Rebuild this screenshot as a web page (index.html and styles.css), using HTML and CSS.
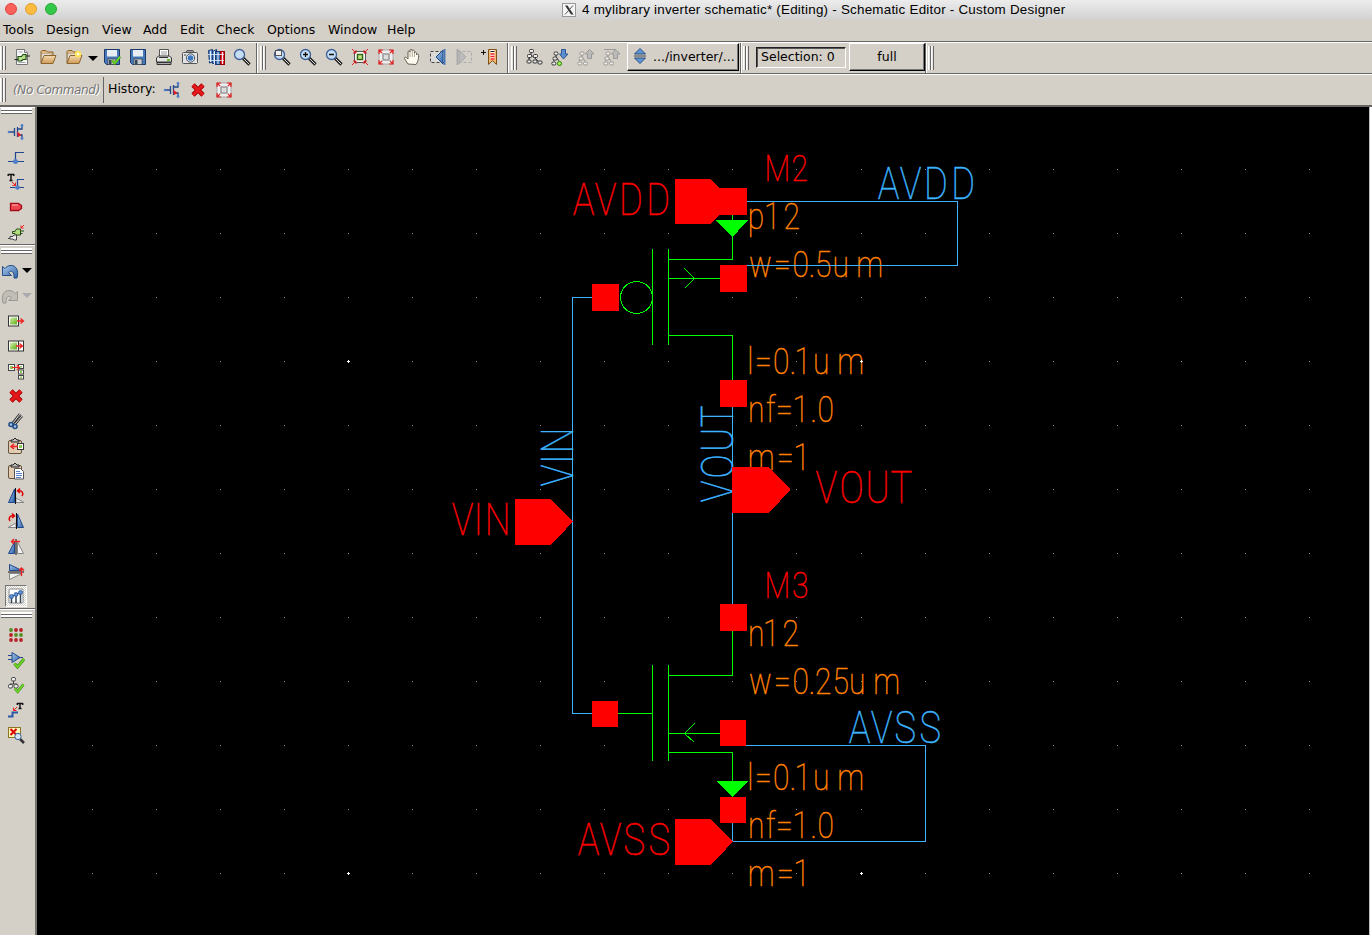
FILE: index.html
```html
<!DOCTYPE html>
<html lang="en">
<head>
<meta charset="utf-8">
<title>Schematic Editor</title>
<link rel="stylesheet" href="styles.css">
</head>
<body>
<svg class="defs" width="0" height="0" aria-hidden="true">
<defs>
<linearGradient id="blue" x1="0" y1="0" x2="1" y2="1"><stop offset="0" stop-color="#a9c8ea"/><stop offset="1" stop-color="#2f64a8"/></linearGradient>
<linearGradient id="tan" x1="0" y1="0" x2="0" y2="1"><stop offset="0" stop-color="#f3d9b0"/><stop offset="1" stop-color="#cf9b58"/></linearGradient>
<linearGradient id="lime" x1="0" y1="0" x2="1" y2="1"><stop offset="0" stop-color="#d2efa9"/><stop offset="1" stop-color="#5fae1b"/></linearGradient>
<symbol id="lens" viewBox="0 0 18 18"><path d="M10 10l6.500 6.500" stroke="#222" stroke-width="3.200"/><path d="M10.500 10.500l5.500 5.500" stroke="#ddd" stroke-width="1"/><circle cx="6.500" cy="6.500" r="5" fill="#c5dcf5" stroke="#3c5f93" stroke-width="1.300"/></symbol>
<symbol id="cross" viewBox="0 0 18 18"><path d="M4 4l10 10M14 4l-10 10" stroke="#a50000" stroke-width="4.600"/><path d="M4 4l10 10M14 4l-10 10" stroke="#e8171c" stroke-width="3"/></symbol>
<symbol id="fit" viewBox="0 0 18 18"><rect x="2" y="2" width="14" height="14" fill="#eee" stroke="#aaa"/><rect x="6" y="6" width="6" height="6" fill="#ddd" stroke="#999" stroke-width="1.500"/><path d="M2 6V2h4M12 2h4v4M16 12v4h-4M6 16H2v-4M2 2l3 3M16 2l-3 3M16 16l-3-3M2 16l3-3" fill="none" stroke="#e22020" stroke-width="1.200"/></symbol>
<symbol id="mos" viewBox="0 0 18 18"><path d="M2 9h5M7.500 5v8M10.500 4v10M10.500 6H15V2.500M10.500 12H15v4" fill="none" stroke="#20488e" stroke-width="1.300"/><path d="M10 8.500l4.500 3.500-3.500 2z" fill="#e21f26"/><circle cx="2" cy="9" r="1.300" fill="#5280c8"/><circle cx="15" cy="2.500" r="1.400" fill="#5280c8"/><circle cx="15" cy="15.500" r="1.400" fill="#5280c8"/></symbol>
<symbol id="tree" viewBox="0 0 18 18"><path d="M5 6v3M5 9L2.500 13M5 9l3 4" fill="none" stroke="currentColor"/><g fill="#eee" stroke="currentColor"><rect x="3" y="4" width="4" height="3" rx="1.300"/><rect x="2" y="9" width="4" height="3" rx="1.300"/><rect x="0.800" y="14" width="4" height="3" rx="1.300"/><rect x="6.500" y="14" width="4" height="3" rx="1.300"/></g></symbol>
<symbol id="tick" viewBox="0 0 12 12"><path d="M1.500 6.500l3 3.500L11 2" fill="none" stroke="#3d8a12" stroke-width="3"/><path d="M1.500 6.500l3 3.500L11 2" fill="none" stroke="#6fd827" stroke-width="1.800"/></symbol>
<symbol id="clip" viewBox="0 0 18 18"><rect x="1.500" y="3.500" width="13" height="13" rx="1.500" fill="#e1cbb1" stroke="#66523d"/><path d="M4 5V3h2l2-2 2 2h2v2z" fill="#bbb" stroke="#222"/></symbol>
<symbol id="floppy" viewBox="0 0 18 18"><path d="M1.500 1.500h15v15h-13l-2-2z" fill="#4778b8" stroke="#1c396c"/><rect x="4" y="2" width="10" height="6.500" fill="#e7edf3"/><rect x="5" y="11" width="8" height="5.500" fill="#c8ccd0" stroke="#333" stroke-width=".6"/><rect x="6" y="12" width="2.500" height="4" fill="#345"/></symbol>
<symbol id="folder" viewBox="0 0 18 18"><path d="M2 15V3.500l1-1h4l1.500 1.500H14V8" fill="#dcb683" stroke="#8c6430"/><path d="M3 6h9v7H3z" fill="#f5f5f2" stroke="#aaa" stroke-width=".6"/><path d="M2 15.500L5 7.500h12l-3 8z" fill="url(#tan)" stroke="#8c6430"/></symbol>
<pattern id="grid-left" x="92" y="169" width="64" height="64" patternUnits="userSpaceOnUse"><rect width="1" height="1" fill="#929292"/></pattern>
<pattern id="grid-right" x="861" y="169" width="64" height="64" patternUnits="userSpaceOnUse"><rect width="1" height="1" fill="#929292"/></pattern>
</defs>
</svg>

<header class="titlebar">
  <div class="lights"><span class="light close"></span><span class="light minimize"></span><span class="light expand"></span></div>
  <div class="title"><svg class="x-icon" viewBox="0 0 14 14"><rect x=".5" y=".5" width="13" height="13" fill="#f5f5f5" stroke="#999"/><path d="M3 2.500h2.500l6 9H9z" fill="#333"/><path d="M11 2.500l-8 9" stroke="#555"/></svg><span class="title-text">4 mylibrary inverter schematic* (Editing) - Schematic Editor - Custom Designer</span></div>
</header>

<nav class="menu">
  <span class="m-tools">Tools</span><span class="m-design">Design</span><span class="m-view">View</span><span class="m-add">Add</span><span class="m-edit">Edit</span><span class="m-check">Check</span><span class="m-options">Options</span><span class="m-window">Window</span><span class="m-help">Help</span>
</nav>

<div class="toolbar">
  <div class="group g-file">
    <i class="grip"></i>
    <b class="tool"><svg viewBox="0 0 18 18"><path d="M3.500 1.500h8l3 3v12h-11z" fill="#f6f6f6" stroke="#777"/><path d="M11.500 1.500v3h3" fill="#ddd" stroke="#777"/><path d="M5.500 4h4M5.500 14.500h7" stroke="#aaa"/><path d="M1.500 11.500H5M13 8h4" stroke="#222"/><path d="M5 8.500h3.500L10 6.500h3v5h-3L8.500 13H5z" fill="#b8e08a" stroke="#1b4d12" stroke-width="1.200"/></svg></b>
    <b class="tool"><svg viewBox="0 0 18 18"><use href="#folder"/></svg></b>
    <b class="tool"><svg viewBox="0 0 18 18"><use href="#folder"/><circle cx="13" cy="6" r="3.200" fill="#ffe14d"/><circle cx="13" cy="6" r="1.500" fill="#fffde0"/></svg></b>
    <i class="drop"></i>
    <b class="tool"><svg viewBox="0 0 18 18"><use href="#floppy"/><use href="#tick" x="8" y="6" width="10" height="12"/></svg></b>
    <b class="tool"><svg viewBox="0 0 18 18"><use href="#floppy"/></svg></b>
    <b class="tool"><svg viewBox="0 0 18 18"><path d="M4.500 9V1.500h9V9" fill="#fff" stroke="#555"/><path d="M6 4h6M6 6h6" stroke="#999"/><path d="M1.500 14V10l2-2h11l2 2v4z" fill="#e4e4e4" stroke="#333"/><path d="M2 14.500h14v2H2z" fill="#aaa" stroke="#333"/><rect x="12" y="11" width="3" height="2" fill="#67bd2c"/><path d="M4 9.500h9" stroke="#333"/></svg></b>
    <b class="tool"><svg viewBox="0 0 18 18"><rect x="1.500" y="4.500" width="15" height="11" rx="1" fill="#e2e4e6" stroke="#555"/><path d="M5 4.500l1-2h6l1 2z" fill="#999" stroke="#555"/><circle cx="9.500" cy="10" r="4.200" fill="#dce8f5" stroke="#555"/><circle cx="9.500" cy="10" r="2.800" fill="#3e78c1"/><path d="M3 7h2" stroke="#444"/></svg></b>
    <b class="tool"><svg viewBox="0 0 18 18"><path d="M1.500 2.500l4-1v12.500l-3 1z" fill="#5c8fd0" stroke="#173a70"/><path d="M5.500 3.500l4-2v14h-4z" fill="#6e9edb" stroke="#173a70"/><rect x="8.500" y="3.500" width="5" height="13" fill="#3567ab" stroke="#173a70"/><rect x="13.500" y="3.500" width="4" height="13" fill="#e62430" stroke="#900"/><path d="M1 6.500h16M1 12.500h16" stroke="#e6eefb" stroke-width=".8"/><path d="M3.500 3v11M7.500 3v13M11 4v12M15.500 4v12" stroke="#e6eefb"/></svg></b>
    <b class="tool"><svg viewBox="0 0 18 18"><use href="#lens"/></svg></b>
  </div>
  <div class="group g-zoom">
    <i class="grip"></i>
    <b class="tool"><svg viewBox="0 0 18 18"><use href="#lens"/><rect x="2.500" y="2.500" width="6" height="5" fill="#f1f1f1" stroke="#555"/></svg></b>
    <b class="tool"><svg viewBox="0 0 18 18"><use href="#lens"/><path d="M4 6.500h5M6.500 4v5" stroke="#111" stroke-width="1.300"/></svg></b>
    <b class="tool"><svg viewBox="0 0 18 18"><use href="#lens"/><path d="M4 6.500h5" stroke="#111" stroke-width="1.500"/></svg></b>
    <b class="tool"><svg viewBox="0 0 18 18"><rect x="3.500" y="3.500" width="11" height="11" fill="#f6f6f6" stroke="#555"/><rect x="6.500" y="6.500" width="5" height="5" fill="#bde98b" stroke="#396a13" stroke-width="1.500"/><path d="M1 1l4 4M17 1l-4 4M1 17l4-4M17 17l-4-4M2 5h3V2M13 2v3h3M2 13h3v3M16 13h-3v3" fill="none" stroke="#e22020"/></svg></b>
    <b class="tool"><svg viewBox="0 0 18 18"><use href="#fit"/></svg></b>
    <b class="tool"><svg viewBox="0 0 18 18"><path d="M5 16L1.500 10.500c-.5-1 .8-1.800 1.700-1L5 11V4c0-1.500 2-1.500 2 0V2.500c0-1.500 2.200-1.500 2.200 0V3c0-1.400 2.200-1.400 2.200.3V5c0-1.300 2.100-1.300 2.100.3V7c.3-1.200 2.500-1.200 2.200.8-.2 4-.9 6-2.700 8.700z" fill="#fffaf0" stroke="#6b6155"/><path d="M7 4v5M9.300 3v6M11.500 5v4" stroke="#a59a8b" stroke-width=".8"/></svg></b>
    <b class="tool"><svg viewBox="0 0 18 18"><rect x="1.500" y="3.500" width="14" height="11" fill="#dcdad6" stroke="#444" stroke-dasharray="3 2"/><path d="M14 2v14L7 9z" fill="url(#blue)" stroke="#204a86"/><path d="M15.500 1v16" stroke="#4b78b5" stroke-width="2"/></svg></b>
    <b class="tool"><svg viewBox="0 0 18 18"><rect x="2.500" y="3.500" width="14" height="11" fill="none" stroke="#aaa" stroke-dasharray="3 2"/><path d="M4 2v14l7-7z" fill="#bbb" stroke="#aaa"/><path d="M2.500 1v16" stroke="#aaa" stroke-width="2"/></svg></b>
    <b class="tool"><svg viewBox="0 0 18 18"><path d="M0 4.500h5M2.500 2v5" stroke="#111"/><path d="M7.500 1.500h8v15l-4-4-4 4z" fill="#f5b96b" stroke="#80501a"/><path d="M9.500 2v10h4V2z" fill="#fff"/><path d="M9.500 3.500h4" stroke="#222"/><path d="M9.500 6h4M9.500 8.500h4M9.500 11h4" stroke="#e22" stroke-width="1.500"/></svg></b>
  </div>
  <div class="group g-tree">
    <i class="grip"></i>
    <b class="tool"><svg viewBox="0 0 18 18"><path d="M6 4v3M6 7l-2 4M6 7l5 4M4 10v4M11 11l4 4" stroke="#333"/><g fill="#eee" stroke="#333"><rect x="4.500" y="1.500" width="4" height="3" rx="1"/><rect x="2.500" y="6.500" width="4" height="3" rx="1"/><rect x="8.500" y="6.500" width="4" height="3" rx="1"/><rect x="2" y="12" width="4" height="3" rx="1"/><rect x="8" y="12" width="4" height="3" rx="1"/><rect x="13" y="13" width="4" height="3" rx="1"/></g></svg></b>
    <b class="tool ink"><svg viewBox="0 0 18 18"><use href="#tree"/><circle cx="8.500" cy="15.500" r="2" fill="#a6ef59" stroke="#3c9411"/><path d="M10.500 1.500h4V6H17l-4.500 5L8.500 6h2z" fill="#5c8fd0" stroke="#2c568f"/></svg></b>
    <b class="tool faint"><svg viewBox="0 0 18 18"><use href="#tree"/><path d="M10.500 10.500h4V6H17l-4.500-4.500L8.500 6h2z" fill="#bbb" stroke="#999"/></svg></b>
    <b class="tool faint"><svg viewBox="0 0 18 18"><use href="#tree"/><path d="M1 1.500h12M10.500 10.500h4V6H17l-4.500-4.500L8.500 6h2z" fill="#bbb" stroke="#999"/></svg></b>
    <button class="path-button"><svg class="updown" viewBox="0 0 12 16"><path d="M6 .5L11.500 6H.5zM6 15.500L11.500 10H.5z" fill="#5f95d4" stroke="#274f83"/><path d="M0 8h12" stroke="#444"/></svg><span>.../inverter/...</span></button>
  </div>
  <div class="group g-selection">
    <i class="grip"></i>
    <div class="selection">Selection: 0</div>
    <button class="full-button">full</button>
  </div>
  <div class="group g-end"><i class="grip"></i></div>
</div>

<div class="history">
  <i class="grip"></i>
  <em class="command">(No Command)</em>
  <span class="history-label">History:</span>
  <b class="tool"><svg viewBox="0 0 18 18"><use href="#mos"/></svg></b>
  <b class="tool"><svg viewBox="0 0 18 18"><use href="#cross"/></svg></b>
  <b class="tool"><svg viewBox="0 0 18 18"><use href="#fit"/></svg></b>
</div>

<main class="workspace">
  <aside class="sidebar">
    <section class="palette p-create">
      <i class="bar"></i>
      <b class="side"><svg viewBox="0 0 18 18"><use href="#mos"/></svg></b>
      <b class="side"><svg viewBox="0 0 18 18"><path d="M1 13.500h16M8.500 13V4.500H17" fill="none" stroke="#20488e" stroke-width="1.200"/><circle cx="8.500" cy="13.500" r="2.500" fill="#5280c8"/></svg></b>
      <b class="side"><svg viewBox="0 0 18 18"><path d="M3 14.500h14M10.500 14V6.500H17" fill="none" stroke="#20488e" stroke-width="1.200"/><circle cx="10.500" cy="14.500" r="2.300" fill="#5280c8"/><path d="M1 1.500h6M4 1.500v6M2.500 7.500h3M1.200 1v2M6.800 1v2" stroke="#111" stroke-width="1.400"/><path d="M5 9l3.500 3.500M8.500 9.500v3h-3" fill="none" stroke="#e22"/></svg></b>
      <b class="side"><svg viewBox="0 0 18 18"><path d="M3.500 5.500h8l3 2v3l-3 2h-8z" fill="#ee4651" stroke="#a50c16" stroke-width="1.300"/><path d="M5 7h6" stroke="#ffb5b9"/></svg></b>
      <b class="side"><svg viewBox="0 0 18 18"><path d="M5.500 8.500H8L9.500 6h4v6h-4L8 10.500H5.500zM13.500 8h3.500M13.500 10.500h2" fill="#b2dc7e" stroke="#234e14"/><path d="M1 15.500h2M3 13.500h3l1-1.500h2.500v5H7l-1-1H3z" fill="#eee" stroke="#444"/><path d="M17 2l-3 3M14 2.500V5h2.500" fill="none" stroke="#e22"/></svg></b>
    </section>
    <section class="palette p-edit">
      <i class="bar"></i>
      <div class="pair"><b class="side"><svg viewBox="0 0 18 18"><path d="M1.500 4.500v9h9L7.500 10.500c3-2.500 6-1 5.500 5.500h3c2-8-1-12.500-6-12.500-3 0-5 1.500-6 3z" fill="url(#blue)" stroke="#234f85"/></svg></b><i class="drop"></i></div>
      <div class="pair"><b class="side"><svg viewBox="0 0 18 18"><path d="M16.500 4.500v9h-9L10.500 10.500c-3-2.500-6-1-5.500 5.500H2c-2-8 1-12.500 6-12.500 3 0 5 1.500 6 3z" fill="#c1beb8" stroke="#9a9791"/></svg></b><i class="drop dim"></i></div>
      <b class="side"><svg viewBox="0 0 18 18"><rect x="1.500" y="4" width="10" height="10" fill="#fff" stroke="#333"/><rect x="3" y="5.500" width="7" height="7" fill="url(#lime)"/><path d="M10 9h6M13.500 6.500L16.500 9l-3 2.500" fill="none" stroke="#e22" stroke-width="1.300"/></svg></b>
      <b class="side"><svg viewBox="0 0 18 18"><rect x="1.500" y="4" width="15" height="10" fill="#fff" stroke="#333"/><rect x="3" y="5.500" width="7" height="7" fill="url(#lime)"/><path d="M11.500 4v10" stroke="#333"/><path d="M9 9h6M12.500 6.500L15.500 9l-3 2.500" fill="none" stroke="#e22" stroke-width="1.300"/></svg></b>
      <b class="side"><svg viewBox="0 0 18 18"><g fill="#fff" stroke="#444"><rect x="1.500" y="2.500" width="6" height="6"/><rect x="11.500" y="2.500" width="5" height="4"/><rect x="11.500" y="8" width="5" height="4"/><rect x="11.500" y="13.500" width="5" height="3.500"/></g><path d="M3 4h3v3H3zM13 4h2v1.500h-2zM13 9h2v2h-2zM13 14.500h2V16h-2z" fill="#8ccb4e"/><path d="M5 5.500h7M10 3l2.500 2.500L10 8" fill="none" stroke="#e22" stroke-width="1.200"/></svg></b>
      <b class="side"><svg viewBox="0 0 18 18"><use href="#cross"/></svg></b>
      <b class="side"><svg viewBox="0 0 18 18"><path d="M5 12l8-10M8 12L15 4" stroke="#333" stroke-width="2.600"/><path d="M6 11l7-9M8 12l7-8" stroke="#ddd"/><circle cx="4" cy="12.500" r="2" fill="#a7c4e8" stroke="#234f85" stroke-width="1.600"/><circle cx="8" cy="14.500" r="2" fill="#a7c4e8" stroke="#234f85" stroke-width="1.600"/></svg></b>
      <b class="side"><svg viewBox="0 0 18 18"><use href="#clip"/><rect x="10.500" y="6.500" width="6" height="6" fill="#fff" stroke="#333"/><rect x="12" y="8" width="3" height="3" fill="#8ccb4e"/><path d="M11 9.500H4M7 7L4 9.500 7 12" fill="none" stroke="#e22" stroke-width="1.500"/></svg></b>
      <b class="side"><svg viewBox="0 0 18 18"><use href="#clip"/><path d="M7.500 6.500h6l3 3v7.500h-9z" fill="#fff" stroke="#555"/><path d="M9 9.500h4M9 11.500h6M9 13.500h6M9 15.500h5" stroke="#5585c7"/></svg></b>
      <b class="side"><svg viewBox="0 0 18 18"><path d="M7.500 2v13.500h-6z" fill="url(#blue)" stroke="#20488e"/><path d="M9 15.500h8L9 11z" fill="#eee" stroke="#888"/><path d="M8.500 1v16" stroke="#111"/><path d="M15 9c2-3 0-6-4-5M13 1.500L10.500 4 13 6" fill="none" stroke="#d00" stroke-width="1.500"/></svg></b>
      <b class="side"><svg viewBox="0 0 18 18"><path d="M10.500 2v13.500h6z" fill="url(#blue)" stroke="#20488e"/><path d="M9 15.500H1L9 11z" fill="#eee" stroke="#888"/><path d="M9.500 1v16" stroke="#111"/><path d="M3 9c-2-3 0-6 4-5M5 1.500L7.500 4 5 6" fill="none" stroke="#d00" stroke-width="1.500"/></svg></b>
      <b class="side"><svg viewBox="0 0 18 18"><path d="M7.500 4v11.500h-6z" fill="url(#blue)" stroke="#20488e"/><path d="M10.500 4v11.500h6z" fill="#f2f2f2" stroke="#888"/><path d="M9 1v16" stroke="#111"/><path d="M4.500 3.500H13M7 1L4.500 3.500 7 6" fill="none" stroke="#e22" stroke-width="1.400"/></svg></b>
      <b class="side"><svg viewBox="0 0 18 18"><path d="M2.500 1.500v6H15z" fill="url(#blue)" stroke="#20488e"/><path d="M2.500 10.500v6L15 10.500z" fill="#f2f2f2" stroke="#888"/><path d="M1 9h16" stroke="#111"/><path d="M14.500 13V5M12 7.500L14.500 5 17 7.500" fill="none" stroke="#e22" stroke-width="1.400"/></svg></b>
      <b class="side pressed"><svg viewBox="0 0 18 18"><rect x="2" y="2" width="14" height="14" rx="1" fill="#fff" stroke="#888"/><path d="M4.500 9v7M9 7v9M13.500 5v11" stroke="#345" stroke-width="1.500"/><path d="M4.500 9.500L13.500 5.500" stroke="#345"/><g fill="#5d91d4" stroke="#20488e" stroke-width=".7"><circle cx="4.500" cy="9.500" r="2"/><circle cx="9" cy="7.500" r="2"/><circle cx="13.500" cy="5.500" r="2"/></g></svg></b>
    </section>
    <section class="palette p-check">
      <i class="bar"></i>
      <b class="side"><svg viewBox="0 0 18 18"><g fill="#b81f27"><circle cx="4" cy="4" r="1.900" fill="#538f22"/><circle cx="9" cy="4" r="1.900"/><circle cx="14" cy="4" r="1.900"/><circle cx="4" cy="9" r="1.900"/><circle cx="9" cy="9" r="1.900" fill="#538f22"/><circle cx="14" cy="9" r="1.900" fill="#538f22"/><circle cx="4" cy="14" r="1.900"/><circle cx="9" cy="14" r="1.900"/><circle cx="14" cy="14" r="1.900"/></g></svg></b>
      <b class="side"><svg viewBox="0 0 18 18"><path d="M1 4.500h4M1 8.500h4M12 6.500h4" stroke="#20488e"/><path d="M5 1.500l8 5-8 5z" fill="url(#blue)" stroke="#20488e"/><use href="#tick" x="6" y="6" width="12" height="12"/></svg></b>
      <b class="side"><svg viewBox="0 0 18 18"><path d="M6.500 4v4M3 9.500V8h7v2" fill="none" stroke="#444"/><g fill="#eee" stroke="#444"><rect x="4.500" y="1.500" width="4" height="3.500" rx="1.300"/><rect x="1.500" y="8.500" width="4" height="3.500" rx="1.300"/><rect x="7" y="8.500" width="4" height="3.500" rx="1.300"/></g><use href="#tick" x="6.500" y="6" width="11" height="12"/></svg></b>
      <b class="side"><svg viewBox="0 0 18 18"><path d="M1 15.500h4.500v-4H11" fill="none" stroke="#2a5ba8" stroke-width="2"/><path d="M10 2.500h6M13 2v6M11.500 7.500h3M10.300 2v2M15.700 2v2" stroke="#111" stroke-width="1.400"/><path d="M10 6l-3.500 3.500M6.500 6.500v3h3" fill="none" stroke="#e22"/></svg></b>
      <b class="side"><svg viewBox="0 0 18 18"><rect x="1.500" y="1.500" width="12" height="10" fill="#fff6b5" stroke="#8a7625"/><path d="M3.500 3l6 6M9.500 3l-6 6" stroke="#d00" stroke-width="2"/><path d="M13 13l4 4" stroke="#333" stroke-width="2.500"/><circle cx="11" cy="10.500" r="3.200" fill="#cfe2f6" stroke="#3c5f93"/></svg></b>
    </section>
  </aside>

  <svg class="canvas" viewBox="37 107 1332 828" shape-rendering="crispEdges">
    <rect x="92" y="169" width="705" height="705" fill="url(#grid-left)"/>
    <rect x="861" y="169" width="449" height="705" fill="url(#grid-right)"/>

    <g class="param">
      <text transform="translate(560 229) scale(.3333 .4065)" x="588 637 695">p12</text>
      <text transform="translate(560 277) scale(.3333 .4065)" x="601 667 722 756 790 842 929">w=0.5um</text>
      <text transform="translate(560 374) scale(.3333 .4065)" x="571 610 664 699 728 784 872">l=0.1um</text>
      <text transform="translate(560 422) scale(.3333 .4065)" x="589 632 673 722 761 797">nf=1.0</text>
      <text transform="translate(560 470) scale(.3333 .4065)" x="604 676 725">m=1</text>
      <text transform="translate(560 646) scale(.3333 .4065)" x="589 634 692">n12</text>
      <text transform="translate(560 694) scale(.3333 .4065)" x="601 667 722 756 790 842 892 980">w=0.25um</text>
      <text transform="translate(560 790) scale(.3333 .4065)" x="571 610 664 699 728 784 872">l=0.1um</text>
      <text transform="translate(560 838) scale(.3333 .4065)" x="589 632 673 722 761 797">nf=1.0</text>
      <text transform="translate(560 886) scale(.3333 .4065)" x="604 676 725">m=1</text>
    </g>
    <g class="instance">
      <text transform="translate(560 181) scale(.3333 .4065)" x="652.500 719">M2</text>
      <text transform="translate(560 598) scale(.3333 .4065)" x="652.500 721">M3</text>
    </g>
    <g class="pin-name">
      <text transform="translate(560 215) scale(.3333 .4065)" x="70.500 136.500 213 294.500">AVDD</text>
      <text transform="translate(560 855) scale(.3333 .4065)" x="86 152 223 298">AVSS</text>
      <text transform="translate(440 535) scale(.3333 .4065)" x="68 115 172.500">VIN</text>
      <text transform="translate(440 503) scale(.3333 .4065)" x="1159 1235 1313 1384">VOUT</text>
    </g>
    <g class="net-name">
      <text transform="translate(560 199) scale(.3333 .4065)" x="986 1052 1128 1209.500">AVDD</text>
      <text transform="translate(560 743) scale(.3333 .4065)" x="899 965 1036 1111">AVSS</text>
      <text transform="translate(573 340) rotate(-90) scale(.3333 .4065)" x="-406 -358 -301">VIN</text>
      <text transform="translate(733 340) rotate(-90) scale(.3333 .4065)" x="-454 -379 -299.500 -229.500">VOUT</text>
    </g>

    <path class="wire" d="M747 201.500H957.500V265.500H747M592 297.500H572.500V713.500H592M732.500 407V604M746 745.500H925.500V841.500H732.500V823"/>
    <path class="device" d="M732.500 215V259.500H668M652.500 249V345M668.500 249V345M668 278.500H720M668 335.500H732.500V380M684.500 268.500L694.500 278.500L684.500 288.500M732.500 631V675.500H668M652.500 665V761M668.500 665V761M618 713.500H652M668 733.500H720M668 752.500H732.500V782M694.500 723.500L684.500 733.500L694.500 742.500"/>
    <circle class="device" cx="636.500" cy="297.500" r="16"/>
    <path class="solid" d="M716 220H748L732.500 237ZM716 781H748L732.500 797Z"/>
    <path class="pin" d="M675 179H711L733 201.500L711 224H675ZM732 467H769L790.500 489.500L769 513H732ZM515 499H551L573 521.500L551 545H515ZM675 819H711L733 841.500L711 865H675Z"/>
    <path class="pin" d="M720 188h27v27h-27zM720 265h27v27h-27zM592 284h27v27h-27zM720 380h27v27h-27zM720 604h27v27h-27zM592 701h26v26h-26zM720 720h26v26h-26zM720 797h26v26h-26z"/>
    <path class="major" d="M347 361.500h3M348.500 360v3M860 361.500h3M861.500 360v3M347 873.500h3M348.500 872v3M860 873.500h3M861.500 872v3"/>
  </svg>
  <div class="edge"></div>
</main>
</body>
</html>
```
FILE: styles.css
```css
* { box-sizing: border-box; }
body {
  margin: 0;
  width: 1372px;
  height: 935px;
  overflow: hidden;
  display: flex;
  flex-direction: column;
  background: #d4cfc7;
  color: #000;
  font: 12.5px "DejaVu Sans", sans-serif;
}
.defs { display: block; flex: none; width: 0; height: 0; position: absolute; }

.titlebar {
  height: 20px;
  flex: none;
  display: flex;
  align-items: center;
  background: linear-gradient(#ececec, #d1d1d1);
}
.lights { display: flex; gap: 8px; padding-left: 5px; width: 562px; margin-top: -2px; }
.light { width: 12px; height: 12px; border-radius: 50%; border: 1px solid; }
.close { background: #fc605b; border-color: #e04640; }
.minimize { background: #fdbc40; border-color: #de9f34; }
.expand { background: #34c84a; border-color: #28a834; }
.title { display: flex; align-items: center; gap: 6px; margin-top: -1px; white-space: nowrap; font: 13.4px "Liberation Sans", Arial, sans-serif; letter-spacing: .235px; }
.x-icon { width: 14px; height: 14px; }

.menu { height: 21px; flex: none; display: flex; padding-left: 3px; line-height: 19px; }
.m-tools { width: 43px; }
.m-design { width: 56px; }
.m-view { width: 41px; }
.m-add { width: 37px; }
.m-edit { width: 36px; }
.m-check { width: 51px; }
.m-options { width: 61px; }
.m-window { width: 59px; }

.toolbar, .history {
  height: 32px;
  flex: none;
  display: flex;
  border-top: 1px solid #666;
  box-shadow: inset 0 1px #fff;
  padding-top: 1px;
}
.group { display: flex; align-items: center; border-right: 1px solid #666; box-shadow: 1px 0 #fff; }
.g-file { width: 257px; }
.g-zoom { width: 251px; padding-left: 3px; }
.g-tree { width: 233px; padding-left: 3px; }
.g-selection { width: 185px; padding-left: 2px; }
.g-end { border: 0; box-shadow: none; padding-left: 2px; }
.grip {
  flex: none;
  width: 6px;
  height: 24px;
  margin-right: 3px;
  background: linear-gradient(90deg, #fff 0 1px, #e8e5df 1px 2px, #666 2px 3px, #fff 3px 4px, #e8e5df 4px 5px, #666 5px 6px);
}
.g-tree .grip { margin-right: 4px; }
.tool { flex: none; width: 26px; height: 28px; padding-bottom: 2px; display: flex; align-items: center; justify-content: center; }
.tool svg, .side svg { width: 18px; height: 18px; flex: none; }
.ink { color: #333; }
.faint { color: #99958e; }
.drop { width: 12px; flex: none; display: flex; justify-content: center; }
.drop::before { content: ""; border: 5px solid transparent; border-top-color: #000; border-bottom: 0; }
.drop.dim::before { border-top-color: #aaa9b0; }

button {
  padding: 0 0 2px;
  margin: 0 0 2px;
  font: inherit;
  color: inherit;
  background: #d4cfc7;
  height: 28px;
  border: 1px solid;
  border-color: #fff #000 #000 #fff;
  box-shadow: inset -1px -1px #777;
}
.path-button { width: 112px; margin-left: 2px; display: flex; align-items: center; padding-left: 6px; gap: 7px; white-space: nowrap; }
.updown { width: 12px; height: 16px; flex: none; }
.selection {
  width: 90px;
  height: 21px;
  margin: 0 3px 1px 4px;
  padding-left: 4px;
  line-height: 17px;
  white-space: nowrap;
  border: 1px solid;
  border-color: #222 #fff #fff #222;
  box-shadow: inset 1px 1px #555;
}
.full-button { width: 76px; }

.history { align-items: center; padding-bottom: 1px; }
.history .grip { margin-right: 0; }
.history .tool { padding-bottom: 0; }
.command {
  width: 98px;
  height: 26px;
  padding-left: 7px;
  margin-right: 4px;
  line-height: 26px;
  color: #777;
  font-size: 12px;
  letter-spacing: -.35px;
  text-shadow: 1px 1px #fff;
  white-space: nowrap;
  border-right: 1px solid #666;
}
.history-label { width: 51px; line-height: 24px; margin-bottom: 2px; }

.workspace { flex: 1; min-height: 0; display: flex; border-top: 2px solid #66655f; }
.sidebar { width: 37px; flex: none; border-right: 2px solid #74736d; }
.palette { border-bottom: 1px solid #666; box-shadow: inset 0 1px #fff; display: flex; flex-direction: column; }
.p-create { height: 138px; padding-top: 1px; }
.p-edit { height: 364px; padding-top: 3px; }
.p-check { border: 0; padding-top: 3px; }
.bar {
  height: 6px;
  width: 31px;
  flex: none;
  margin: 0 0 5px 1px;
  background: linear-gradient(#fff 0 2px, #666 2px 3px, #fff 3px 5px, #666 5px 6px);
}
.p-edit .bar, .p-check .bar { margin-bottom: 4px; }
.side { height: 25.100px; width: 32px; flex: none; display: flex; align-items: center; justify-content: center; }
.pair { display: flex; align-items: center; height: 25.100px; }
.pair .side { width: 20px; }
.pair .drop { width: 14px; }
.pressed {
  width: 22px;
  height: 22px;
  margin: 1px 0 0 5px;
  background: repeating-conic-gradient(#fff 0 25%, #d4cfc7 0 50%) 0 0 / 2px 2px;
  border: 1px solid;
  border-color: #777 #fff #fff #777;
}
.canvas { width: 1332px; height: 828px; flex: none; background: #000; display: block; }
.edge { flex: 1; background: #fff; border-left: 1px solid #bbb; }

.canvas text { font-family: Roboto, sans-serif; font-weight: 100; text-anchor: middle; stroke-width: 1.300px; }
.param text { font-size: 90px; fill: #ff8000; stroke: #ff8000; }
.instance text { font-size: 90px; fill: #f00; stroke: #f00; }
.pin-name text { font-size: 109px; fill: #f00; stroke: #f00; }
.net-name text { font-size: 109px; fill: #3cb4ff; stroke: #3cb4ff; }
.wire { fill: none; stroke: #3cb4ff; }
.device { fill: none; stroke: #0f0; }
.solid { fill: #0f0; }
.pin { fill: #f00; }
.major { stroke: #fff; }
```
